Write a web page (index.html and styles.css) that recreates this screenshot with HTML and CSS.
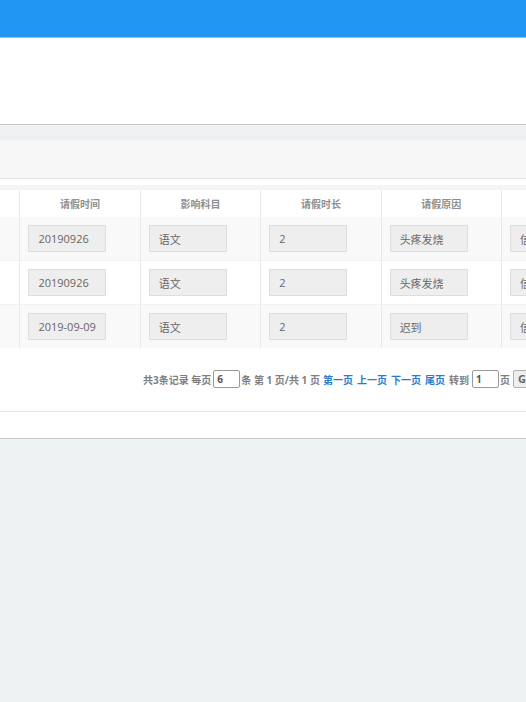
FILE: index.html
```html
<!DOCTYPE html>
<html lang="zh-CN">
<head>
<meta charset="utf-8">
<title>请假记录</title>
<link rel="stylesheet" href="styles.css">
</head>
<body>
<div class="topbar"></div>
<div class="banner"></div>
<div class="panel">
  <div class="panel-head"></div>
  <div class="panel-body">
    <div class="table-wrap">
      <table class="grid">
        <thead>
          <tr>
            <th>学生姓名</th>
            <th>请假时间</th>
            <th>影响科目</th>
            <th>请假时长</th>
            <th>请假原因</th>
            <th>假条类型</th>
          </tr>
        </thead>
        <tbody>
          <tr class="odd">
            <td><span class="field">张三</span></td>
            <td><span class="field">20190926</span></td>
            <td><span class="field">语文</span></td>
            <td><span class="field">2</span></td>
            <td><span class="field">头疼发烧</span></td>
            <td><span class="field">信息</span></td>
          </tr>
          <tr>
            <td><span class="field">张三</span></td>
            <td><span class="field">20190926</span></td>
            <td><span class="field">语文</span></td>
            <td><span class="field">2</span></td>
            <td><span class="field">头疼发烧</span></td>
            <td><span class="field">信息</span></td>
          </tr>
          <tr class="odd">
            <td><span class="field">张三</span></td>
            <td><span class="field">2019-09-09</span></td>
            <td><span class="field">语文</span></td>
            <td><span class="field">2</span></td>
            <td><span class="field">迟到</span></td>
            <td><span class="field">信息</span></td>
          </tr>
        </tbody>
      </table>
    </div>
    <div class="pager">
      <span class="lead">共3条记录 每页</span><span class="pbox">6</span><span>条 第 1 页/共 1 页</span>
      <a class="plink">第一页</a><a class="plink">上一页</a><a class="plink">下一页</a><a class="plink">尾页</a>
      <span>转到</span><span class="pbox">1</span><span>页</span><span class="gobtn">GO</span>
    </div>
  </div>
  <div class="panel-foot"></div>
</div>
</body>
</html>
```

FILE: styles.css
```css
html, body {
  margin: 0;
  padding: 0;
}
body {
  background: #eef1f2;
  font-family: "Open Sans", "Noto Sans CJK SC", sans-serif;
  color: #666;
  width: 526px;
  overflow: hidden;
}
.topbar {
  height: 37px;
  background: #2196f3;
  border-bottom: 1px solid #8cc6f5;
}
.banner {
  height: 86px;
  background: #fff;
  border-bottom: 1px solid #c6c8c9;
}
.panel {
  margin-top: 15px;
  background: #fff;
  border-bottom: 1px solid #c6c8c9;
}
.panel-head {
  height: 38px;
  background: #f7f7f7;
  border-bottom: 1px solid #e4e4e4;
}
.panel-body {
  padding-top: 6px;
  border-bottom: 1px solid #e4e4e4;
}
.table-wrap {
  overflow: hidden;
  border-top: 5px solid #f4f4f4;
}
.grid {
  border-collapse: collapse;
  table-layout: fixed;
  margin-left: -101px;
  width: 723px;
}
.grid th, .grid td {
  border-left: 1px solid #e9e9e9;
  padding: 0;
}
.grid th {
  height: 27px;
  font-size: 10px;
  font-weight: 700;
  color: #8f8f8f;
  text-align: center;
  background: #fff;
  font-family: "Noto Sans CJK SC", sans-serif;
}
.grid td {
  height: 43px;
  padding-left: 8px;
  border-top: 1px solid #f1f1f1;
}
.grid tbody tr:first-child td {
  border-top: none;
}
.grid tr.odd td {
  background: #f9f9f9;
}
.field {
  display: flex;
  align-items: center;
  box-sizing: border-box;
  width: 78px;
  height: 27px;
  padding-left: 9px;
  background: #eeeeee;
  border: 1px solid #dddddd;
  font-size: 11px;
  color: #666;
  font-family: "Open Sans", "Noto Sans CJK SC", sans-serif;
}
.pager {
  display: flex;
  align-items: center;
  justify-content: flex-start;
  padding: 22px 0 23px 143px;
  font-size: 10px;
  font-weight: 700;
  color: #808080;
  white-space: nowrap;
  font-family: "Open Sans", "Noto Sans CJK SC", sans-serif;
}
.pager span, .pager a {
  flex-shrink: 0;
  margin-right: 3px;
}
.pager .lead {
  margin-right: 2px;
}
.pager .plink {
  color: #2a7ccc;
  margin-right: 4px;
}
.pager .pbox {
  box-sizing: border-box;
  width: 27px;
  height: 18px;
  border: 1px solid #9a9a9a;
  border-radius: 2px;
  padding-left: 3px;
  line-height: 16px;
  color: #555;
  margin-right: 1px;
  margin-left: 0;
}
.pager .gobtn {
  box-sizing: border-box;
  height: 18px;
  padding: 0 4px;
  border: 1px solid #b0b0b0;
  border-radius: 2px;
  background: #eeeeee;
  line-height: 16px;
  color: #666;
  font-size: 11px;
}
.panel-foot {
  height: 26px;
  background: #fff;
}
```
